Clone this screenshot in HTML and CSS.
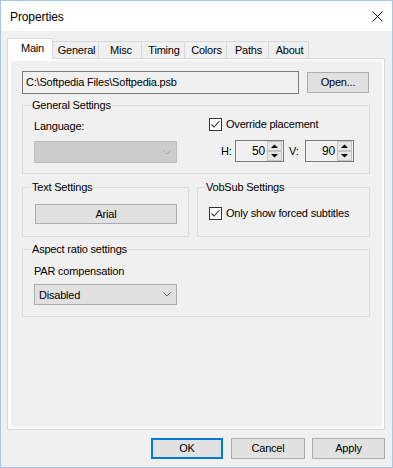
FILE: index.html
```html
<!DOCTYPE html>
<html>
<head>
<meta charset="utf-8">
<link rel="stylesheet" href="styles.css">
</head>
<body>
<div class="window">
  <div class="titlebar">
    <span class="title">Properties</span>
    <svg class="close" width="11" height="11" viewBox="0 0 11 11"><path d="M0.5 0.5 L10.5 10.5 M10.5 0.5 L0.5 10.5" stroke="#000" stroke-width="1" fill="none"/></svg>
  </div>
  <div class="body">
    <div class="tabs">
      <div class="tab active t-main">Main</div>
      <div class="tab t-general">General</div>
      <div class="tab t-misc">Misc</div>
      <div class="tab t-timing">Timing</div>
      <div class="tab t-colors">Colors</div>
      <div class="tab t-paths">Paths</div>
      <div class="tab t-about">About</div>
    </div>
    <div class="panel">
      <div class="page">
        <div class="path-row">
          <div class="textbox path">C:\Softpedia Files\Softpedia.psb</div>
          <div class="btn open">Open...</div>
        </div>

        <div class="group g-general">
          <div class="legend">General Settings</div>
          <div class="general-body">
            <div class="col-lang">
              <div class="lbl lang-lbl">Language:</div>
              <div class="combo combo-disabled">
                <span class="combo-text"></span>
                <svg class="chev" width="8" height="5" viewBox="0 0 8 5"><path d="M0.5 0.5 L4 4 L7.5 0.5" stroke="#a6a6a6" fill="none"/></svg>
              </div>
            </div>
            <div class="col-place">
              <div class="check-row">
                <svg class="cb" width="13" height="13" viewBox="0 0 13 13"><rect x="0.5" y="0.5" width="12" height="12" fill="#fff" stroke="#333"/><path d="M2.5 6.5 L5 9 L10.5 3" stroke="#333" stroke-width="1.1" fill="none"/></svg>
                <span>Override placement</span>
              </div>
              <div class="hv-row">
                <span class="hv-lbl h-lbl">H:</span>
                <div class="spin">
                  <span class="val">50</span>
                  <svg class="arrows" width="15" height="20" viewBox="0 0 15 20"><rect x="0.5" y="0.5" width="14" height="9" fill="#e5e5e5" stroke="#c4c4c4"/><rect x="0.5" y="10.5" width="14" height="9" fill="#e5e5e5" stroke="#c4c4c4"/><path d="M4 7 L7.5 3.5 L11 7 Z" fill="#000"/><path d="M4 13 L7.5 16.5 L11 13 Z" fill="#000"/></svg>
                </div>
                <span class="hv-lbl v-lbl">V:</span>
                <div class="spin">
                  <span class="val">90</span>
                  <svg class="arrows" width="15" height="20" viewBox="0 0 15 20"><rect x="0.5" y="0.5" width="14" height="9" fill="#e5e5e5" stroke="#c4c4c4"/><rect x="0.5" y="10.5" width="14" height="9" fill="#e5e5e5" stroke="#c4c4c4"/><path d="M4 7 L7.5 3.5 L11 7 Z" fill="#000"/><path d="M4 13 L7.5 16.5 L11 13 Z" fill="#000"/></svg>
                </div>
              </div>
            </div>
          </div>
        </div>

        <div class="row2">
          <div class="group g-text">
            <div class="legend">Text Settings</div>
            <div class="btn arial">Arial</div>
          </div>
          <div class="group g-vob">
            <div class="legend legend-vob">VobSub Settings</div>
            <div class="check-row vob-check">
              <svg class="cb" width="13" height="13" viewBox="0 0 13 13"><rect x="0.5" y="0.5" width="12" height="12" fill="#fff" stroke="#333"/><path d="M2.5 6.5 L5 9 L10.5 3" stroke="#333" stroke-width="1.1" fill="none"/></svg>
              <span>Only show forced subtitles</span>
            </div>
          </div>
        </div>

        <div class="group g-aspect">
          <div class="legend">Aspect ratio settings</div>
          <div class="lbl par-lbl">PAR compensation</div>
          <div class="combo combo-enabled">
            <span class="combo-text">Disabled</span>
            <svg class="chev" width="8" height="5" viewBox="0 0 8 5"><path d="M0.5 0.5 L4 4 L7.5 0.5" stroke="#606060" fill="none"/></svg>
          </div>
        </div>
      </div>
    </div>
    <div class="buttons">
      <div class="btn dlg ok">OK</div>
      <div class="btn dlg cancel">Cancel</div>
      <div class="btn dlg apply">Apply</div>
    </div>
  </div>
</div>
</body>
</html>
```

FILE: styles.css
```css
html, body {
  margin: 0;
  padding: 0;
  background: #f0f0f0;
}

.window {
  width: 393px;
  height: 468px;
  box-sizing: border-box;
  border: 1px solid #a4c8ec;
  background: #f0f0f0;
  display: flex;
  flex-direction: column;
  font-family: "Liberation Sans", Arial, sans-serif;
  font-size: 11px;
  letter-spacing: -0.2px;
  color: #000;
}

.titlebar {
  height: 30px;
  flex: none;
  background: #fff;
  display: flex;
  align-items: center;
  justify-content: space-between;
  padding: 0 9px 0 9px;
}

.title {
  font-size: 12px;
  letter-spacing: -0.1px;
  margin-top: 1px;
}

.close {
  display: block;
}

.body {
  padding: 7px 7px 0 6px;
  display: flex;
  flex-direction: column;
}

.tabs {
  display: flex;
  align-items: flex-end;
  height: 20px;
  position: relative;
  z-index: 1;
}

.tab {
  box-sizing: border-box;
  height: 17px;
  border-top: 1px solid #d9d9d9;
  border-right: 1px solid #d9d9d9;
  background: #f0f0f0;
  line-height: 16px;
  text-align: center;
  padding-left: 2px;
}

.tab.active {
  height: 21px;
  margin-bottom: -1px;
  border-left: 1px solid #d9d9d9;
  background: #fff;
  line-height: 18px;
  padding-left: 5px;
}

.t-main { width: 46px; }
.t-general { width: 46px; }
.t-misc { width: 43px; }
.t-timing { width: 43px; }
.t-colors { width: 42px; }
.t-paths { width: 42px; }
.t-about { width: 40px; }

.panel {
  box-sizing: border-box;
  height: 372px;
  border: 1px solid #d9d9d9;
  background: #fff;
  padding: 2px 2px 2px 3px;
}

.page {
  height: 100%;
  background: #f0f0f0;
  box-sizing: border-box;
  padding: 10px 0 0 11px;
}

.path-row {
  display: flex;
  align-items: center;
}

.textbox {
  box-sizing: border-box;
  border: 1px solid #7a7a7a;
  background: #f0f0f0;
}

.path {
  width: 277px;
  height: 23px;
  line-height: 21px;
  padding-left: 3px;
}

.btn {
  box-sizing: border-box;
  border: 1px solid #adadad;
  background: #e1e1e1;
  text-align: center;
}

.open {
  width: 62px;
  height: 21px;
  line-height: 19px;
  margin-left: 8px;
}

.group {
  box-sizing: border-box;
  border: 1px solid #dcdcdc;
  width: 348px;
}

.legend {
  margin: -7px 0 0 8px;
  padding: 0 1px;
  background: #f0f0f0;
  width: fit-content;
  line-height: 13px;
}

.g-general {
  margin-top: 11px;
  height: 69px;
}

.general-body {
  display: flex;
}

.col-lang {
  padding-left: 11px;
  width: 143px;
}

.lbl {
  line-height: 13px;
}

.lang-lbl {
  margin-top: 8px;
}

.combo {
  box-sizing: border-box;
  width: 143px;
  display: flex;
  align-items: center;
  justify-content: space-between;
  padding: 0 5px 0 4px;
}

.combo-disabled {
  margin-top: 8px;
  height: 22px;
  background: #cccccc;
  border: 1px solid #bfbfbf;
}

.combo-enabled {
  margin-top: 6px;
  margin-left: 11px;
  height: 21px;
  background: #e1e1e1;
  border: 1px solid #adadad;
}

.chev {
  display: block;
}

.col-place {
  margin-left: 32px;
}

.check-row {
  display: flex;
  align-items: center;
  height: 13px;
  line-height: 13px;
}

.check-row .cb {
  display: block;
  flex: none;
  margin-right: 4px;
}

.col-place .check-row {
  margin-top: 6px;
}

.hv-row {
  display: flex;
  align-items: center;
  margin-top: 9px;
  height: 22px;
}

.h-lbl {
  margin-left: 12px;
  width: 14px;
}

.v-lbl {
  margin-left: 5px;
  width: 16px;
}

.spin {
  box-sizing: border-box;
  width: 49px;
  height: 22px;
  border: 1px solid #7a7a7a;
  background: #f0f0f0;
  display: flex;
  align-items: center;
  justify-content: flex-end;
  padding-right: 1px;
}

.spin .val {
  margin-right: 2px;
  font-size: 12px;
}

.spin .arrows {
  display: block;
}

.row2 {
  display: flex;
  margin-top: 13px;
}

.g-text {
  width: 167px;
  height: 50px;
}

.g-vob {
  width: 173px;
  height: 50px;
  margin-left: 8px;
}

.legend-vob {
  margin-left: 7px;
}

.arial {
  width: 142px;
  height: 20px;
  line-height: 18px;
  margin: 10px 0 0 12px;
}

.vob-check {
  margin: 13px 0 0 11px;
}

.g-aspect {
  margin-top: 12px;
  height: 68px;
}

.par-lbl {
  margin: 9px 0 0 11px;
}

.buttons {
  display: flex;
  justify-content: flex-end;
  margin-top: 8px;
}

.dlg {
  height: 21px;
  line-height: 19px;
}

.ok {
  width: 72px;
  border: 2px solid #0078d7;
  line-height: 17px;
}

.cancel {
  width: 74px;
  margin-left: 8px;
}

.apply {
  width: 73px;
  margin-left: 7px;
}
```
